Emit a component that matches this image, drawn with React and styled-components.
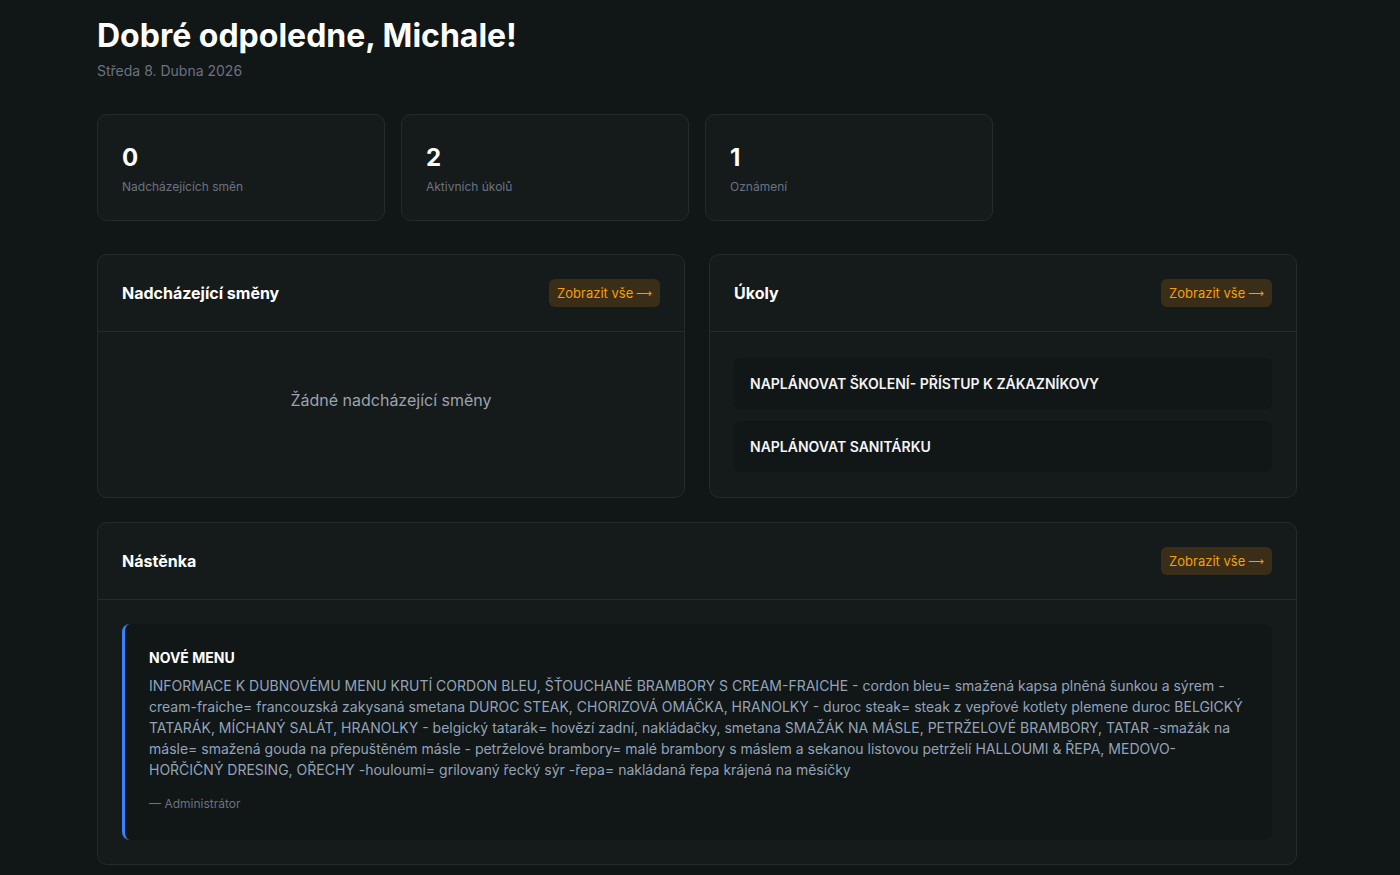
import React from "react";
import styled, { createGlobalStyle } from "styled-components";

const GlobalStyle = createGlobalStyle`
  * { box-sizing: border-box; }
  body {
    margin: 0;
    background: #111617;
    font-family: Inter, "Noto Sans", sans-serif;
    color: #f3f4f6;
  }
`;

const Page = styled.main`
  width: 1200px;
  margin: 0 0 0 97px;
  padding: 16px 0 12px;
`;

const Greeting = styled.h1`
  margin: 0;
  font-size: 32px;
  line-height: 39px;
  font-weight: 700;
  color: #fff;
`;

const DateLine = styled.div`
  margin-top: 7px;
  font-size: 14px;
  color: #6b7280;
`;

const Stats = styled.section`
  display: grid;
  grid-template-columns: repeat(4, 1fr);
  gap: 16px;
  margin-top: 35px;
`;

const StatCard = styled.div`
  height: 107px;
  padding: 31px 24px 0;
  background: #151a1b;
  border: 1px solid #252b2d;
  border-radius: 10px;
`;

const StatValue = styled.div`
  font-size: 24px;
  line-height: 24px;
  font-weight: 700;
  color: #fff;
`;

const StatLabel = styled.div`
  margin-top: 9px;
  font-size: 12px;
  color: #6b7280;
`;

const Row = styled.section`
  display: grid;
  grid-template-columns: 1fr 1fr;
  gap: 24px;
  margin-top: 33px;
`;

const Panel = styled.div`
  background: #151a1b;
  border: 1px solid #252b2d;
  border-radius: 10px;
  display: flex;
  flex-direction: column;
  margin-top: ${(p) => p.$gap || 0}px;
`;

const PanelHeader = styled.header`
  height: 77px;
  padding: 0 24px;
  display: flex;
  align-items: center;
  justify-content: space-between;
  border-bottom: 1px solid #252b2d;
`;

const PanelTitle = styled.h2`
  margin: 0;
  font-size: 16px;
  font-weight: 700;
  color: #fff;
`;

const ShowAll = styled.a`
  height: 28px;
  padding: 0 8px;
  display: inline-flex;
  align-items: center;
  gap: 3px;
  border-radius: 6px;
  background: #3a2e19;
  color: #f59e0b;
  font-size: 13px;
  text-decoration: none;
`;

const Arrow = styled.span`
  font-family: "DejaVu Sans", sans-serif;
  font-size: 11px;
`;

const Empty = styled.div`
  height: 165px;
  padding-top: 58px;
  text-align: center;
  font-size: 16px;
  color: #9ca3af;
`;

const TaskList = styled.div`
  padding: 26px 24px 25px;
  display: flex;
  flex-direction: column;
  gap: 12px;
`;

const Task = styled.div`
  height: 51px;
  padding: 0 16px;
  display: flex;
  align-items: center;
  background: #111617;
  border-radius: 6px;
  font-size: 14px;
  font-weight: 600;
  color: #f3f4f6;
`;

const BoardBody = styled.div`
  padding: 24px;
`;

const Post = styled.article`
  background: #111617;
  border-left: 3px solid #3b82f6;
  border-radius: 8px;
  padding: 25px 24px 29px 24px;
`;

const PostTitle = styled.h3`
  margin: 0 0 9px;
  font-size: 14px;
  font-weight: 700;
  color: #fff;
`;

const PostText = styled.p`
  margin: 0;
  font-size: 14px;
  line-height: 21px;
  color: #94a3b8;
`;

const Author = styled.div`
  margin-top: 16px;
  font-size: 12px;
  color: #6b7280;
`;

const stats = [
  { value: 0, label: "Nadcházejících směn" },
  { value: 2, label: "Aktivních úkolů" },
  { value: 1, label: "Oznámení" },
];

const tasks = ["NAPLÁNOVAT ŠKOLENÍ- PŘÍSTUP K ZÁKAZNÍKOVY", "NAPLÁNOVAT SANITÁRKU"];

const menuText =
  "INFORMACE K DUBNOVÉMU MENU KRUTÍ CORDON BLEU, ŠŤOUCHANÉ BRAMBORY S CREAM-FRAICHE - cordon bleu= smažená kapsa plněná šunkou a sýrem - cream-fraiche= francouzská zakysaná smetana DUROC STEAK, CHORIZOVÁ OMÁČKA, HRANOLKY - duroc steak= steak z vepřové kotlety plemene duroc BELGICKÝ TATARÁK, MÍCHANÝ SALÁT, HRANOLKY - belgický tatarák= hovězí zadní, nakládačky, smetana SMAŽÁK NA MÁSLE, PETRŽELOVÉ BRAMBORY, TATAR -smažák na másle= smažená gouda na přepuštěném másle - petrželové brambory= malé brambory s máslem a sekanou listovou petrželí HALLOUMI & ŘEPA, MEDOVO-HOŘČIČNÝ DRESING, OŘECHY -houloumi= grilovaný řecký sýr -řepa= nakládaná řepa krájená na měsíčky";

const ShowAllLink = () => (
  <ShowAll href="#">
    Zobrazit vše <Arrow>⟶</Arrow>
  </ShowAll>
);

const App = () => {
  return (
    <>
      <GlobalStyle />
      <Page>
        <Greeting>Dobré odpoledne, Michale!</Greeting>
        <DateLine>Středa 8. Dubna 2026</DateLine>

        <Stats>
          {stats.map((s) => (
            <StatCard key={s.label}>
              <StatValue>{s.value}</StatValue>
              <StatLabel>{s.label}</StatLabel>
            </StatCard>
          ))}
        </Stats>

        <Row>
          <Panel>
            <PanelHeader>
              <PanelTitle>Nadcházející směny</PanelTitle>
              <ShowAllLink />
            </PanelHeader>
            <Empty>Žádné nadcházející směny</Empty>
          </Panel>
          <Panel>
            <PanelHeader>
              <PanelTitle>Úkoly</PanelTitle>
              <ShowAllLink />
            </PanelHeader>
            <TaskList>
              {tasks.map((t) => (
                <Task key={t}>{t}</Task>
              ))}
            </TaskList>
          </Panel>
        </Row>

        <Panel $gap={24}>
          <PanelHeader>
            <PanelTitle>Nástěnka</PanelTitle>
            <ShowAllLink />
          </PanelHeader>
          <BoardBody>
            <Post>
              <PostTitle>NOVÉ MENU</PostTitle>
              <PostText>{menuText}</PostText>
              <Author>— Administrátor</Author>
            </Post>
          </BoardBody>
        </Panel>
      </Page>
    </>
  );
};

export default App;
